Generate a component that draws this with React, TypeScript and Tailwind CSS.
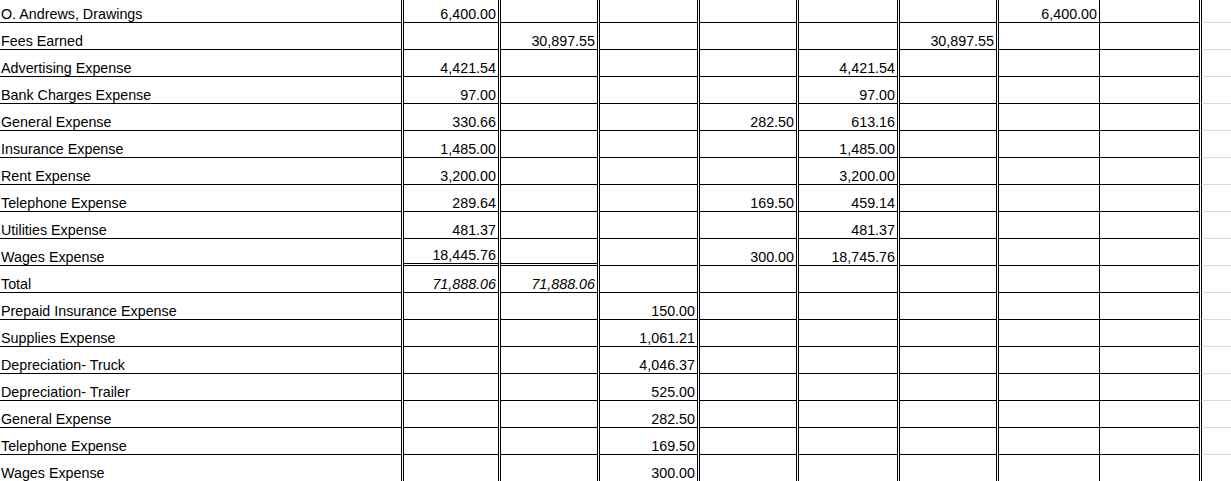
import React from "react";

type Row = {
  label: string;
  v: (string | null)[]; // B..I
  italic?: boolean;
  doubleBottom?: boolean;
};

const rows: Row[] = [
  { label: "O. Andrews, Drawings", v: ["6,400.00", null, null, null, null, null, "6,400.00", null] },
  { label: "Fees Earned", v: [null, "30,897.55", null, null, null, "30,897.55", null, null] },
  { label: "Advertising Expense", v: ["4,421.54", null, null, null, "4,421.54", null, null, null] },
  { label: "Bank Charges Expense", v: ["97.00", null, null, null, "97.00", null, null, null] },
  { label: "General Expense", v: ["330.66", null, null, "282.50", "613.16", null, null, null] },
  { label: "Insurance Expense", v: ["1,485.00", null, null, null, "1,485.00", null, null, null] },
  { label: "Rent Expense", v: ["3,200.00", null, null, null, "3,200.00", null, null, null] },
  { label: "Telephone Expense", v: ["289.64", null, null, "169.50", "459.14", null, null, null] },
  { label: "Utilities Expense", v: ["481.37", null, null, null, "481.37", null, null, null] },
  { label: "Wages Expense", v: ["18,445.76", null, null, "300.00", "18,745.76", null, null, null], doubleBottom: true },
  { label: "Total", v: ["71,888.06", "71,888.06", null, null, null, null, null, null], italic: true },
  { label: "Prepaid Insurance Expense", v: [null, null, "150.00", null, null, null, null, null] },
  { label: "Supplies Expense", v: [null, null, "1,061.21", null, null, null, null, null] },
  { label: "Depreciation- Truck", v: [null, null, "4,046.37", null, null, null, null, null] },
  { label: "Depreciation- Trailer", v: [null, null, "525.00", null, null, null, null, null] },
  { label: "General Expense", v: [null, null, "282.50", null, null, null, null, null] },
  { label: "Telephone Expense", v: [null, null, "169.50", null, null, null, null, null] },
  { label: "Wages Expense", v: [null, null, "300.00", null, null, null, null, null] },
];

// column box classes (B..I), with gaps between where borders are doubled
const colClass = [
  "w-[96px] border-l border-r",
  "w-[98px] border-l border-r",
  "w-[99px] border-l border-r",
  "w-[98px] border-l border-r",
  "w-[100px] border-l border-r",
  "w-[98px] border-l border-r",
  "w-[102px] border-l border-r",
  "w-[100px] border-r",
];
const gapAfter = [true, true, true, true, true, true, false, true];

export default function App() {
  return (
    <div className="w-[1231px] h-[481px] overflow-hidden bg-white text-black font-['Liberation_Sans',Arial,sans-serif] text-[14.3px] leading-[16px]">
      {rows.map((r, ri) => (
        <div key={ri} className={ri === 0 ? "flex h-[23px]" : "flex h-[27px]"}>
          <div className="w-[402px] shrink-0 flex items-end pl-px border-b border-r border-black whitespace-nowrap">
            {r.label}
          </div>
          <div className="w-px shrink-0" />
          {r.v.map((val, ci) => {
            const dbl = r.doubleBottom && (ci === 0 || ci === 1);
            return (
              <React.Fragment key={ci}>
                <div
                  className={
                    colClass[ci] +
                    " shrink-0 flex items-end justify-end pr-[2px] border-black whitespace-nowrap " +
                    (dbl ? "border-b-[3px] border-double" : "border-b") +
                    (r.italic ? " italic" : "")
                  }
                >
                  {val}
                </div>
                {gapAfter[ci] && <div className="w-px shrink-0" />}
              </React.Fragment>
            );
          })}
          <div className="flex-1 border-l border-l-black border-b border-b-[#dcdcdc]" />
        </div>
      ))}
    </div>
  );
}
